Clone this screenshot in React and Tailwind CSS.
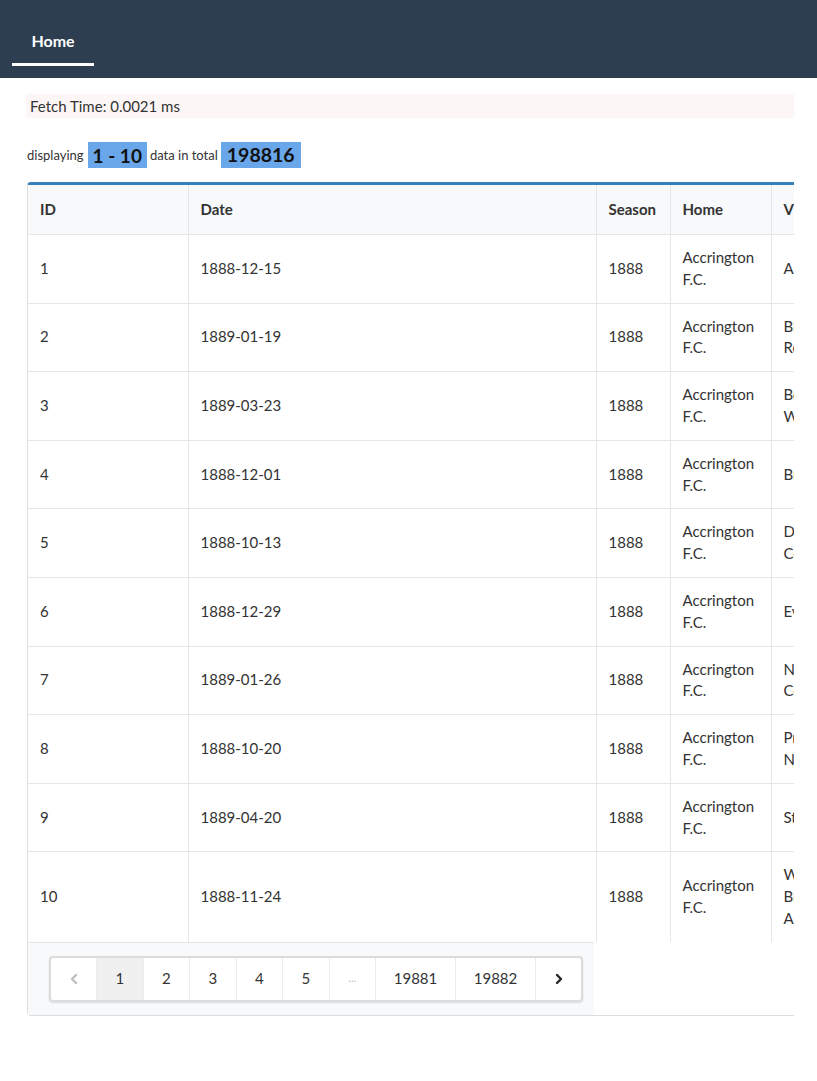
import React from "react";
import { ChevronLeft, ChevronRight } from "lucide-react";

const rows = [
  { id: 1, date: "1888-12-15", visitor: "Aston Villa", ft: "1-1" },
  { id: 2, date: "1889-01-19", visitor: "Blackburn Rovers", ft: "0-2" },
  { id: 3, date: "1889-03-23", visitor: "Bolton Wanderers", ft: "2-3" },
  { id: 4, date: "1888-12-01", visitor: "Burnley", ft: "5-1" },
  { id: 5, date: "1888-10-13", visitor: "Derby County", ft: "6-2" },
  { id: 6, date: "1888-12-29", visitor: "Everton", ft: "3-1" },
  { id: 7, date: "1889-01-26", visitor: "Notts County", ft: "3-3" },
  { id: 8, date: "1888-10-20", visitor: "Preston North End", ft: "0-0" },
  { id: 9, date: "1889-04-20", visitor: "Stoke", ft: "2-0" },
  { id: 10, date: "1888-11-24", visitor: "West Bromwich Albion", ft: "1-2" },
];

const pages = ["1", "2", "3", "4", "5", "...", "19881", "19882"];

function App() {
  return (
    <div className="min-h-screen bg-white font-['Lato','Open_Sans',sans-serif] text-[#333]">
      {/* Nav */}
      <nav className="h-[78px] bg-[#2c3e50] flex items-end">
        <div className="ml-3 mb-[12px] w-[82px] text-center text-white font-bold text-[16px] leading-6 pb-[10px] border-b-[3px] border-white">
          Home
        </div>
      </nav>

      <div className="pl-[26px] pr-[23px] pt-4">
        <div className="h-6 bg-[#fdf6f6] pl-1 text-[15px] leading-6">
          Fetch Time: 0.0021 ms
        </div>

        <div className="mt-6 flex items-center text-[13px] leading-none">
          <span className="ml-px">displaying</span>
          <span className="ml-[4px] bg-[#6aa6ea] px-[5px] h-[26px] flex items-center text-[19px] font-bold text-[#111]">
            1 - 10
          </span>
          <span className="ml-[3px]">data in total</span>
          <span className="ml-[3px] bg-[#6aa6ea] px-[6px] h-[26px] flex items-center text-[19.5px] font-bold text-[#111]">
            198816
          </span>
        </div>

        {/* Table card */}
        <div className="mt-[14px] overflow-hidden">
          <div className="ml-px w-[1100px] rounded border border-[#dedede] border-t-[3px] border-t-[#3380bb] bg-white">
            <table className="table-fixed border-collapse text-[15px] leading-[21.8px]">
              <colgroup>
                <col className="w-[160px]" />
                <col className="w-[408px]" />
                <col className="w-[74px]" />
                <col className="w-[101px]" />
                <col className="w-[105px]" />
                <col className="w-[80px]" />
                <col className="w-[80px]" />
              </colgroup>
              <thead>
                <tr className="bg-[#f8f9fa] border-b border-[#e6e6e6] text-left">
                  <th className="px-3 py-[13.6px] font-bold">ID</th>
                  <th className="px-3 py-[13.6px] font-bold border-l border-[#e6e6e6]">Date</th>
                  <th className="px-3 py-[13.6px] font-bold border-l border-[#e6e6e6]">Season</th>
                  <th className="px-3 py-[13.6px] font-bold border-l border-[#e6e6e6]">Home</th>
                  <th className="px-3 py-[13.6px] font-bold border-l border-[#e6e6e6]">Visitor</th>
                  <th className="px-3 py-[13.6px] font-bold border-l border-[#e6e6e6]">FT</th>
                  <th className="px-3 py-[13.6px] font-bold border-l border-[#e6e6e6]">Tier</th>
                </tr>
              </thead>
              <tbody>
                {rows.map((r, i) => (
                  <tr
                    key={r.id}
                    className={i < rows.length - 1 ? "border-b border-[#e6e6e6]" : ""}
                  >
                    <td className="px-3 py-3 align-middle">{r.id}</td>
                    <td className="px-3 py-3 align-middle border-l border-[#e6e6e6]">{r.date}</td>
                    <td className="px-3 py-3 align-middle border-l border-[#e6e6e6]">1888</td>
                    <td className="px-3 py-3 align-middle border-l border-[#e6e6e6]">Accrington F.C.</td>
                    <td className="px-3 py-3 align-middle border-l border-[#e6e6e6]">{r.visitor}</td>
                    <td className="px-3 py-3 align-middle border-l border-[#e6e6e6]">{r.ft}</td>
                    <td className="px-3 py-3 align-middle border-l border-[#e6e6e6]">1</td>
                  </tr>
                ))}
              </tbody>
            </table>

            {/* Pagination */}
            <div className="w-[566px] bg-[#f8f9fa] border-t border-[#e6e6e6] pl-[21px] pt-[13px] pb-[13px]">
              <div className="inline-flex h-[46px] rounded border-2 border-[#dcdcdc] bg-white shadow-[0_1px_2px_rgba(0,0,0,0.12)] overflow-hidden text-[15px]">
                <div className="w-[45px] flex items-center justify-center text-[#bdbdbd]">
                  <ChevronLeft size={16} strokeWidth={3.5} />
                </div>
                {pages.map((p, i) => (
                  <div
                    key={i}
                    className={
                      "flex items-center justify-center border-l border-[#ececec] " +
                      (p.length > 3 ? "w-[80px] " : "w-[46.5px] ") +
                      (i === 0 ? "bg-[#f0f0f0] " : "") +
                      (p === "..." ? "text-[#bbb] text-[11px]" : "")
                    }
                  >
                    {p}
                  </div>
                ))}
                <div className="w-[46px] flex items-center justify-center border-l border-[#ececec] text-[#222]">
                  <ChevronRight size={16} strokeWidth={3.5} />
                </div>
              </div>
            </div>
          </div>
        </div>
      </div>
    </div>
  );
}

export default App;
